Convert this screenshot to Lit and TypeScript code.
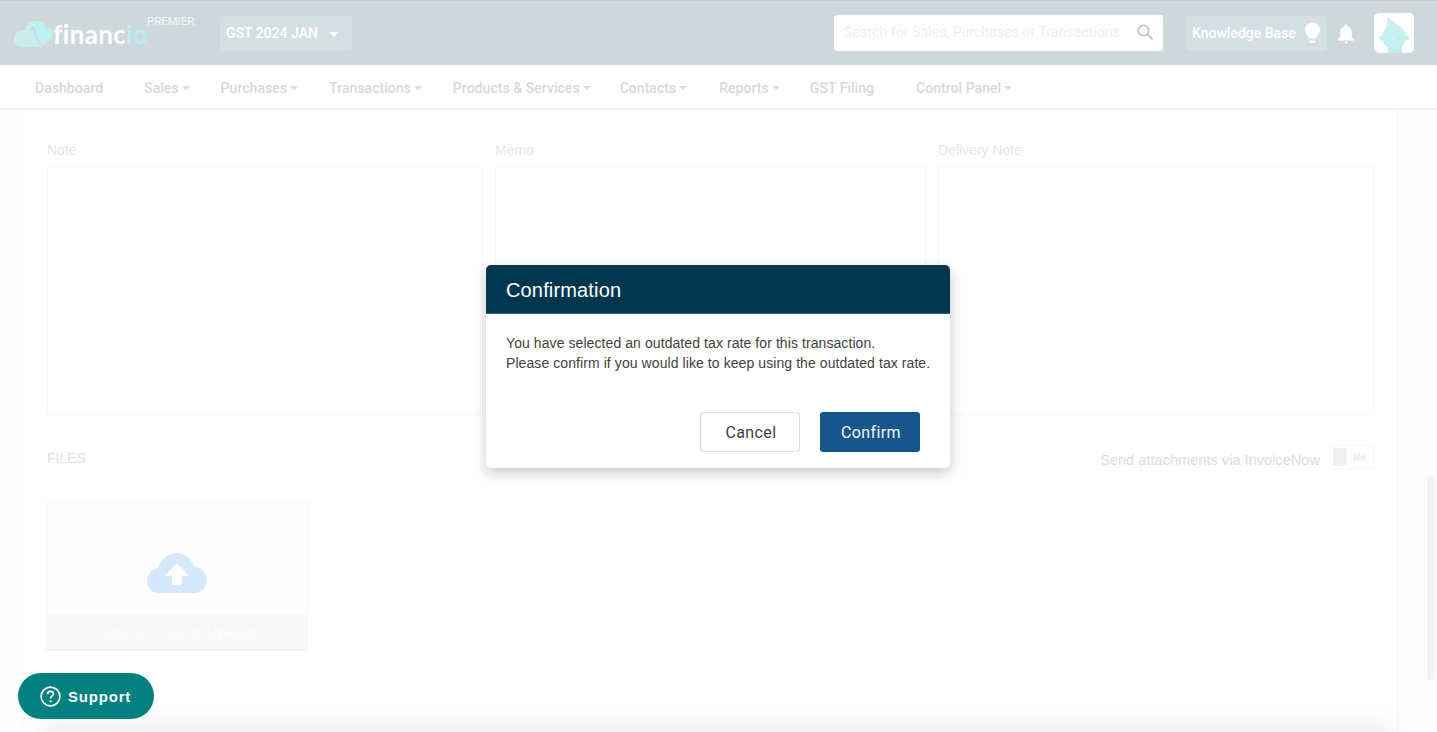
import { LitElement, html, css } from "lit";
import { customElement } from "lit/decorators.js";

const caret = html`<span class="caret"></span>`;
const nav: [string, boolean, number][] = [
  ["Dashboard", false, 41],
  ["Sales", true, 31],
  ["Purchases", true, 31],
  ["Transactions", true, 31],
  ["Products & Services", true, 29],
  ["Contacts", true, 32],
  ["Reports", true, 30],
  ["GST Filing", false, 42],
  ["Control Panel", true, 0],
];

@customElement("app-root")
export class AppRoot extends LitElement {
  static styles = css`
    :host { display: block; width: 1437px; height: 732px; overflow: hidden; position: relative; background: #fefefe; font-family: Roboto, "Liberation Sans", sans-serif; }
    .header { height: 65px; box-sizing: border-box; border-top: 1px solid #c6ced2; background: #cdd7dc; display: flex; align-items: flex-start; color: #fff; }
    .logo { width: 220px; height: 64px; position: relative; flex: none; }
    .logo svg { position: absolute; left: 14px; top: 19px; }
    .wordmark { position: absolute; left: 53px; top: 17px; font: 700 26px/32px Lato, "Open Sans", sans-serif; letter-spacing: 0.35px; color: #fff; }
    .wordmark i { font-style: normal; color: #b9eeee; }
    .premier { position: absolute; left: 147px; top: 13px; font-size: 11.4px; line-height: 14px; color: #f4f7f8; }
    .period { margin-top: 15px; width: 132px; height: 34px; box-sizing: border-box; padding-left: 6px; background: #d5dee2; border-radius: 3px; display: flex; align-items: center; font-size: 14px; font-weight: 500; }
    .period .tri { margin-left: 11px; margin-top: 2px; border: 5px solid transparent; border-top-color: #fff; border-bottom: 0; }
    .spacer { flex: 1; }
    .search { margin-top: 14px; width: 329px; height: 36px; box-sizing: border-box; background: #fff; border-radius: 3px; display: flex; align-items: center; padding: 0 9px 2px 10px; color: #eceeef; font-size: 14px; letter-spacing: 0.05px; }
    .search span { flex: 1; white-space: nowrap; }
    .kb { margin: 15px 0 0 23px; width: 141px; height: 35px; box-sizing: border-box; padding: 0 0 2px 6px; background: #d5dee2; border-radius: 3px; display: flex; align-items: center; gap: 9px; font-size: 14px; font-weight: 500; white-space: nowrap; }
    .kb svg { margin-top: 2px; }
    .bell { margin: 23px 0 0 10px; display: block; flex: none; }
    .avatar { margin: 12px 23px 0 19px; width: 40px; height: 40px; border-radius: 5px; background: #fff; overflow: hidden; flex: none; }
    .avatar svg { display: block; }
    .nav { height: 45px; box-sizing: border-box; background: #fff; border-bottom: 2px solid #eff0f0; display: flex; align-items: center; padding: 3px 0 0 35px; font-size: 14px; font-weight: 500; color: #d8d8d8; letter-spacing: 0.04px; }
    .nav a { display: flex; align-items: center; white-space: nowrap; }
    .caret { margin-left: 3px; border: 4px solid transparent; border-top: 4px solid #dcdcdc; border-bottom: 0; }
    .page { height: 622px; display: flex; background: #fdfdfd; position: relative; overflow: hidden; }
    .card { margin-left: 22px; width: 1376px; height: 622px; flex: none; box-sizing: border-box; background: #fff; border-left: 1px solid #f8f8f8; border-right: 1px solid #f8f8f8; padding: 16px 23px 0 24px; font-family: "Liberation Sans", Arial, sans-serif; }
    .topline { border-top: 1px solid #fcfcfc; margin-bottom: 13px; }
    .fields { display: grid; grid-template-columns: 435.5px 430.5px 436px; column-gap: 12.5px; }
    .field label { display: block; font-size: 14px; line-height: 20px; color: #e6e6e6; margin-bottom: 6px; }
    .field .box { box-sizing: border-box; height: 249px; border: 1px solid #f8f8f8; border-radius: 3px; }
    .filesrow { display: flex; justify-content: space-between; align-items: flex-start; height: 28px; margin-top: 33px; border-bottom: 1px solid #fcfcfc; font-size: 14px; }
    .filesrow b { font-weight: 400; line-height: 20px; color: #e0e0e0; }
    .attach { display: flex; align-items: flex-start; gap: 10px; color: #dcdcdc; font-size: 14.6px; line-height: 16px; margin-top: -3px; }
    .attach span.t { margin-top: 7px; }
    .toggle { width: 44px; height: 24px; box-sizing: border-box; border: 1px solid #f8f8f8; border-radius: 2px; display: flex; align-items: center; padding: 0 2px; gap: 6px; font: 700 10px Roboto, sans-serif; color: #eaeaea; }
    .toggle i { display: block; width: 14px; height: 18px; background: #f0f0f0; }
    .upload { width: 260px; height: 149px; margin-top: 23px; background: #fdfdfd; box-shadow: 0 1px 2px #e6e6e6; display: flex; flex-direction: column; }
    .upload .top { flex: 1; display: flex; align-items: center; justify-content: center; padding-top: 32px; }
    .upload .cap { height: 35px; flex: none; background: #f8f8f8; color: #fdfdfd; font-size: 15px; line-height: 37px; text-align: center; }
    .scrollbar { position: absolute; left: 1427px; top: 366px; width: 8px; height: 204px; background: #f2f2f2; border-radius: 4px; }
    .rstrip { position: absolute; left: 1424px; top: 0; bottom: 0; width: 1px; background: #fafafa; }
    .fade { position: absolute; left: 40px; width: 1352px; top: 100%; height: 20px; box-shadow: 0 -2px 32px rgba(0,0,0,0.13); }
    .support { position: absolute; left: 18px; top: 673px; width: 136px; height: 46px; background: #00807f; border-radius: 23px; color: #fff; display: flex; align-items: center; box-sizing: border-box; padding-left: 22px; gap: 7px; font: 700 15px/1 "Liberation Sans", Arial, sans-serif; letter-spacing: 0.8px; }
    .overlay { position: absolute; inset: 0; }
    .modal { position: absolute; left: 486px; top: 265px; width: 464px; height: 203px; background: #fff; border-radius: 5px; overflow: hidden; box-shadow: 0 5px 14px rgba(0,0,0,0.22); display: flex; flex-direction: column; font-family: "Liberation Sans", Inter, sans-serif; }
    .mhead { height: 49px; flex: none; box-sizing: border-box; background: #01374e; border-bottom: 1px solid #34647b; color: #fff; font-size: 20px; line-height: 50px; padding-left: 20px; letter-spacing: 0.15px; }
    .mbody { padding: 19px 20px 0; font-size: 14px; line-height: 20px; color: #3f3f3f; flex: 1; white-space: nowrap; letter-spacing: 0.08px; }
    .mfoot { display: flex; justify-content: flex-end; gap: 20px; padding: 0 30px 16px; }
    button { width: 100px; height: 40px; box-sizing: border-box; border-radius: 3px; font: 400 16px Roboto, sans-serif; letter-spacing: 0.4px; padding: 0 0 0 2px; }
    .cancel { background: #fff; border: 1px solid #dcdcdc; color: #3f3f3f; }
    .confirm { background: #17568a; border: 0; color: #f4f7fa; }
  `;

  render() {
    return html`
      <div class="header">
        <div class="logo">
          <svg width="38" height="28" viewBox="0 0 38 28">
            <path d="M7 27 C2 27 0 23 0 19 C0 13 5 10 10 11 C12 4 17 1 22 1 C28 1 31 5 32 8 C36 7 38 11 38 15 C38 22 30 24 27 27 Z" fill="#cdeaea"/>
            <path d="M12 11 C13 5 17 1 22 1 C28 1 31 5 32 8 C36 7 38 11 38 15 C38 19 34 21 29 21 L23 21 C20 16 16 12 12 11Z" fill="#bdf1f1"/>
            <path d="M16 11 L19 7 L22 11 M19 8 C20 15 22 20 29 26" stroke="#c5d6da" stroke-width="1.3" fill="none"/>
          </svg>
          <span class="wordmark">financ<i>io</i></span>
          <span class="premier">PREMIER</span>
        </div>
        <div class="period">GST 2024 JAN <span class="tri"></span></div>
        <div class="spacer"></div>
        <div class="search"><span>Search for Sales, Purchases or Transactions</span>
          <svg width="18" height="18" viewBox="0 0 18 18" fill="none" stroke="#bfc3c6" stroke-width="1.8"><circle cx="7.5" cy="7.5" r="5.2"/><path d="M11.5 11.5 L16.5 16.5"/></svg>
        </div>
        <div class="kb">Knowledge Base
          <svg width="15" height="21" viewBox="0 0 15 21" fill="#fff"><path d="M7.5 0 C3 0 0 3 0 7 C0 10.5 3.5 12.5 4.2 15.5 L10.8 15.5 C11.5 12.5 15 10.5 15 7 C15 3 12 0 7.5 0Z"/><rect x="4.5" y="17.5" width="6" height="2.2"/></svg>
        </div>
        <svg class="bell" width="18" height="20" viewBox="0 0 18 20" fill="#fff"><path d="M9 0.5 C8 0.5 7.5 1.2 7.5 2.2 C4.5 3 3.2 5.5 3.2 8.5 L3.2 13 L1 15.5 L1 16.5 L17 16.5 L17 15.5 L14.8 13 L14.8 8.5 C14.8 5.5 13.5 3 10.5 2.2 C10.5 1.2 10 0.5 9 0.5Z"/><path d="M7.4 17.8 H10.6 C10.6 19 9.8 19.6 9 19.6 C8.2 19.6 7.4 19 7.4 17.8Z"/></svg>
        <div class="avatar">
          <svg width="40" height="40" viewBox="0 0 40 40">
            <rect x="14" y="33" width="14" height="8" rx="2" fill="#bfeeee"/>
            <circle cx="7.5" cy="25" r="2" fill="#bfeeee"/><circle cx="33" cy="25" r="2" fill="#bfeeee"/>
            <circle cx="20" cy="24" r="12" fill="#c8f0f0"/>
            <path d="M14 4 L28 15.5 L12 15 Z" fill="#c8f0f0"/>
            <circle cx="16" cy="26" r="0.7" fill="#a5dcdc"/><circle cx="25" cy="26" r="0.7" fill="#a5dcdc"/>
          </svg>
        </div>
      </div>
      <div class="nav">
        ${nav.map(([t, c, gap]) => html`<a style="margin-right:${gap}px">${t}${c ? caret : ""}</a>`)}
      </div>
      <div class="page">
        <div class="card">
          <div class="topline"></div>
          <div class="fields">
            ${["Note", "Memo", "Delivery Note"].map((l) => html`<div class="field"><label>${l}</label><div class="box"></div></div>`)}
          </div>
          <div class="filesrow">
            <b>FILES</b>
            <div class="attach"><span class="t">Send attachments via InvoiceNow</span><div class="toggle"><i></i>No</div></div>
          </div>
          <div class="upload">
            <div class="top">
              <svg width="60" height="40" viewBox="0 0 60 40">
                <path d="M12 40 C4 40 0 34 0 28 C0 21 5 16 11 15 C14 6 21 0 30 0 C38 0 44 5 47 14 C54 14 60 20 60 27 C60 34 54 40 48 40 Z" fill="#d6e9fc"/>
                <path d="M30 10 L42 23 L35 23 L35 32 L25 32 L25 23 L18 23 Z" fill="#fefefe"/>
              </svg>
            </div>
            <div class="cap">Drop or Click to Upload</div>
          </div>
        </div>
        <div class="rstrip"></div>
        <div class="scrollbar"></div>
        <div class="fade"></div>
      </div>
      <div class="support">
        <svg width="21" height="21" viewBox="0 0 21 21" fill="none" stroke="#fff" stroke-width="1.6"><circle cx="10.5" cy="10.5" r="9.4"/><path d="M7.6 8.2 C7.6 6.4 9 5.4 10.6 5.4 C12.2 5.4 13.4 6.5 13.4 7.9 C13.4 9.8 10.6 10 10.6 12.4" stroke-width="1.8"/><circle cx="10.6" cy="15.3" r="1.1" fill="#fff" stroke="none"/></svg>
        Support
      </div>
      <div class="overlay">
        <div class="modal">
          <div class="mhead">Confirmation</div>
          <div class="mbody">You have selected an outdated tax rate for this transaction.<br />Please confirm if you would like to keep using the outdated tax rate.</div>
          <div class="mfoot"><button class="cancel">Cancel</button><button class="confirm">Confirm</button></div>
        </div>
      </div>
    `;
  }
}
